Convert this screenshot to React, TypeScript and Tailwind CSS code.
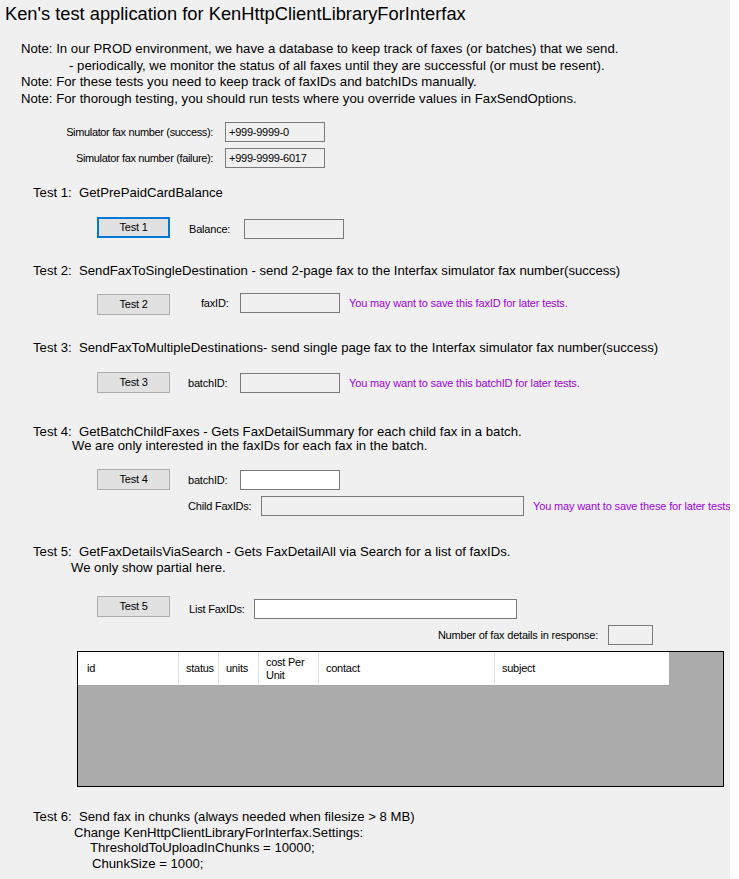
const heading = "text-[13.15px] leading-[20px] h-[20px] whitespace-pre pl-[33px]";
const small = "text-[11px] tracking-[-0.2px]";
const purple = "text-[11px] tracking-[-0.15px] text-[#a000e0] leading-[20px] whitespace-nowrap";

function Btn({ label, focused }: { label: string; focused?: boolean }) {
  return (
    <div
      className={
        "w-[73px] h-[21px] shrink-0 flex items-center justify-center bg-[#e1e1e1] " +
        small +
        (focused ? " border-2 border-[#0078d7]" : " border border-[#adadad]")
      }
    >
      {label}
    </div>
  );
}

function Box({
  className,
  readOnly,
  value,
}: {
  className: string;
  readOnly?: boolean;
  value?: string;
}) {
  return (
    <div
      className={
        "h-[20px] shrink-0 border border-[#7a7a7a] px-[3px] leading-[18px] text-[11px] tracking-[-0.25px] " +
        (readOnly ? "bg-[#f0f0f0] " : "bg-white ") +
        className
      }
    >
      {value}
    </div>
  );
}

function Label({ text, className }: { text: string; className: string }) {
  return (
    <div className={"h-[20px] leading-[20px] shrink-0 whitespace-nowrap " + small + " " + className}>
      {text}
    </div>
  );
}

const columns = [
  { name: "id", w: "w-[100px]" },
  { name: "status", w: "w-[40px]" },
  { name: "units", w: "w-[40px]" },
  { name: "cost Per\nUnit", w: "w-[60px]" },
  { name: "contact", w: "w-[176px]" },
  { name: "subject", w: "w-[175px]" },
];

export default function App() {
  return (
    <div className="w-[739px] h-[879px] flex bg-white font-['Liberation_Sans',Arial,sans-serif] text-black overflow-hidden">
      <div className="w-[730px] h-[879px] bg-[#f0f0f0] flex flex-col">
        <div className="h-[28px] leading-[28px] pl-[5px] text-[18.3px] whitespace-nowrap">
          Ken's test application for KenHttpClientLibraryForInterfax
        </div>

        <div className="mt-[13px] pl-[21px] text-[13.2px] leading-[16.5px] whitespace-pre">
          <div>Note: In our PROD environment, we have a database to keep track of faxes (or batches) that we send.</div>
          <div className="pl-[48px]">- periodically, we monitor the status of all faxes until they are successful (or must be resent).</div>
          <div>Note: For these tests you need to keep track of faxIDs and batchIDs manually.</div>
          <div>Note: For thorough testing, you should run tests where you override values in FaxSendOptions.</div>
        </div>

        <div className="mt-[15px] flex">
          <div className="w-[213px] h-[20px] leading-[20px] text-right text-[11px] tracking-[-0.35px] whitespace-nowrap">
            Simulator fax number (success):
          </div>
          <Box className="ml-[12px] w-[100px]" readOnly value="+999-9999-0" />
        </div>
        <div className="mt-[6px] flex">
          <div className="w-[213px] h-[20px] leading-[20px] text-right text-[11px] tracking-[-0.35px] whitespace-nowrap">
            Simulator fax number (failure):
          </div>
          <Box className="ml-[12px] w-[100px]" readOnly value="+999-9999-6017" />
        </div>

        {/* Test 1 */}
        <div className={"mt-[15px] " + heading}>Test 1:  GetPrePaidCardBalance</div>
        <div className="mt-[14px] h-[21px] flex items-start pl-[97px]">
          <Btn label="Test 1" focused />
          <Label text="Balance:" className="ml-[19px] w-[55px] mt-[2px]" />
          <Box className="w-[100px] mt-[2px]" readOnly />
        </div>

        {/* Test 2 */}
        <div className={"mt-[23px] " + heading}>
          Test 2:  SendFaxToSingleDestination - send 2-page fax to the Interfax simulator fax number(success)
        </div>
        <div className="mt-[12px] h-[22px] flex items-start pl-[97px]">
          <div className="mt-[1px]">
            <Btn label="Test 2" />
          </div>
          <Label text="faxID:" className="ml-[31px] w-[39px]" />
          <Box className="w-[100px]" readOnly />
          <div className={"ml-[9px] " + purple}>You may want to save this faxID for later tests.</div>
        </div>

        {/* Test 3 */}
        <div className={"mt-[23px] " + heading}>
          Test 3:  SendFaxToMultipleDestinations- send single page fax to the Interfax simulator fax number(success)
        </div>
        <div className="mt-[14px] h-[21px] flex items-start pl-[97px]">
          <Btn label="Test 3" />
          <Label text="batchID:" className="ml-[18px] w-[52px] mt-[1px]" />
          <Box className="w-[100px] mt-[1px]" readOnly />
          <div className={"ml-[9px] mt-[1px] " + purple}>You may want to save this batchID for later tests.</div>
        </div>

        {/* Test 4 */}
        <div className="mt-[32px] pl-[33px] text-[13.15px] leading-[14px] whitespace-pre">
          <div>Test 4:  GetBatchChildFaxes - Gets FaxDetailSummary for each child fax in a batch.</div>
          <div className="pl-[39px]">We are only interested in the faxIDs for each fax in the batch.</div>
        </div>
        <div className="mt-[16px] h-[21px] flex items-start pl-[97px]">
          <Btn label="Test 4" />
          <Label text="batchID:" className="ml-[18px] w-[52px] mt-[1px]" />
          <Box className="w-[100px] mt-[1px]" />
        </div>
        <div className="mt-[6px] h-[20px] flex items-start pl-[188px]">
          <Label text="Child FaxIDs:" className="w-[73px]" />
          <Box className="w-[263px]" readOnly />
          <div className={"ml-[9px] " + purple}>You may want to save these for later tests</div>
        </div>

        {/* Test 5 */}
        <div className="mt-[28px] pl-[33px] text-[13.15px] leading-[15.5px] whitespace-pre">
          <div>Test 5:  GetFaxDetailsViaSearch - Gets FaxDetailAll via Search for a list of faxIDs.</div>
          <div className="pl-[38px]">We only show partial here.</div>
        </div>
        <div className="mt-[21px] h-[23px] flex items-start pl-[97px]">
          <Btn label="Test 5" />
          <Label text="List FaxIDs:" className="ml-[19px] w-[65px] mt-[3px]" />
          <Box className="w-[263px] mt-[3px]" />
        </div>
        <div className="mt-[6px] w-[653px] h-[20px] flex justify-end items-start">
          <Label text="Number of fax details in response:" className="text-right" />
          <Box className="ml-[10px] w-[45px]" readOnly />
        </div>

        {/* Grid */}
        <div className="mt-[6px] ml-[77px] w-[647px] h-[136px] border border-black bg-[#ababab] flex flex-col">
          <div className="flex h-[34px] bg-[#ababab]">
            {columns.map((c, i) => (
              <div
                key={c.name}
                className={
                  c.w +
                  " h-[34px] bg-white border-b border-[#a0a0a0] flex items-center pl-[7px] text-[11px] tracking-[-0.25px] leading-[13px] whitespace-pre " +
                  (i > 0 ? "border-l border-l-[#e3e3e3]" : "pl-[9px]")
                }
              >
                {c.name}
              </div>
            ))}
          </div>
        </div>

        {/* Test 6 */}
        <div className="mt-[22px] pl-[33px] text-[13.15px] leading-[15.7px] whitespace-pre">
          <div>Test 6:  Send fax in chunks (always needed when filesize &gt; 8 MB)</div>
          <div className="pl-[41px]">Change KenHttpClientLibraryForInterfax.Settings:</div>
          <div className="pl-[57px]">ThresholdToUploadInChunks = 10000;</div>
          <div className="pl-[59px]">ChunkSize = 1000;</div>
        </div>
      </div>
      <div className="flex-1 bg-white" />
    </div>
  );
}
